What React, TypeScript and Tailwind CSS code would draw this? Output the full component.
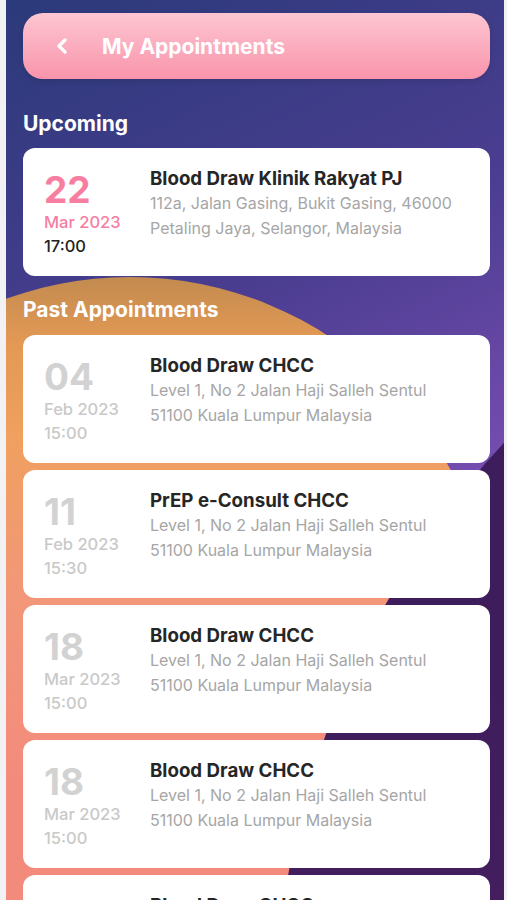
import React from 'react';

type Appt = {
  day: string;
  month: string;
  time: string;
  title: string;
  address: string[];
};

const upcoming: Appt = {
  day: '22',
  month: 'Mar 2023',
  time: '17:00',
  title: 'Blood Draw Klinik Rakyat PJ',
  address: ['112a, Jalan Gasing, Bukit Gasing, 46000', 'Petaling Jaya, Selangor, Malaysia'],
};

const chcc = ['Level 1, No 2 Jalan Haji Salleh Sentul', '51100 Kuala Lumpur Malaysia'];

const past: Appt[] = [
  { day: '04', month: 'Feb 2023', time: '15:00', title: 'Blood Draw CHCC', address: chcc },
  { day: '11', month: 'Feb 2023', time: '15:30', title: 'PrEP e-Consult CHCC', address: chcc },
  { day: '18', month: 'Mar 2023', time: '15:00', title: 'Blood Draw CHCC', address: chcc },
  { day: '18', month: 'Mar 2023', time: '15:00', title: 'Blood Draw CHCC', address: chcc },
  { day: '25', month: 'Mar 2023', time: '15:00', title: 'Blood Draw CHCC', address: chcc },
];

function Card({ appt, active }: { appt: Appt; active?: boolean }) {
  return (
    <div className="flex h-[128px] shrink-0 rounded-[12px] bg-white pl-[21px] pt-[19px]">
      <div className="w-[106px] shrink-0 pt-[5px]">
        <div
          className={`text-[37px] font-bold leading-[36px] ${
            active ? 'text-[#f77ea1]' : 'text-[#d2d2d2]'
          }`}
        >
          {appt.day}
        </div>
        <div
          className={`mt-[2px] text-[16.5px] font-medium leading-[24px] ${
            active ? 'text-[#f77ea1]' : 'text-[#c9c9c9]'
          }`}
        >
          {appt.month}
        </div>
        <div
          className={`text-[16.5px] font-medium leading-[24px] ${
            active ? 'text-[#222222]' : 'text-[#c9c9c9]'
          }`}
        >
          {appt.time}
        </div>
      </div>
      <div className="min-w-0">
        <div className="text-[18.7px] font-bold leading-[24px] text-[#262626]">{appt.title}</div>
        {appt.address.map((line, i) => (
          <div key={i} className="whitespace-nowrap text-[16px] leading-[25px] text-[#a6a6a6]">
            {line}
          </div>
        ))}
      </div>
    </div>
  );
}

export default function App() {
  return (
    <div className="flex h-[900px] w-full overflow-hidden bg-[#f2f2f5] pl-[6px] pr-[3px] font-['Inter','Noto_Sans',sans-serif]">
      <div className="relative flex-1 overflow-hidden bg-[linear-gradient(155deg,#2b3a7a_0%,#4a3d90_35%,#7b4fb4_65%)]">
        {/* background shapes */}
        <div className="absolute left-[-239px] top-[277px] h-[726px] w-[726px] rounded-full bg-[linear-gradient(to_bottom,#c38b4f_0%,#e39955_9%,#f0a05f_22%,#f2977a_45%,#f38b7c_70%)]" />
        <div className="absolute left-[269px] top-[172px] h-[1704px] w-[1704px] rounded-full bg-[linear-gradient(to_bottom,#3b1c5a_0%,#3f1d5c_30%,#4a1f62_60%)]" />

        <div className="relative flex flex-col pl-[17px] pr-[14px] pt-[13px]">
          <div className="flex h-[66px] items-center rounded-[20px] bg-[linear-gradient(to_bottom,#fdc6d2,#f994ab)] pl-[33px] shadow-[0_2px_6px_rgba(0,0,0,0.12)]">
            <svg width="12" height="16" viewBox="0 0 12 16" fill="none" className="shrink-0">
              <polyline
                points="9,2 3,8 9,14"
                stroke="white"
                strokeWidth="3.2"
                strokeLinecap="round"
                strokeLinejoin="round"
              />
            </svg>
            <span className="ml-[34px] text-[21px] font-bold leading-none text-white">My Appointments</span>
          </div>

          <h2 className="mt-[33px] text-[21px] font-bold leading-[24px] text-white">Upcoming</h2>
          <div className="mt-[12px]">
            <Card appt={upcoming} active />
          </div>

          <h2 className="mt-[22px] text-[21px] font-bold leading-[24px] text-white">Past Appointments</h2>
          <div className="mt-[13px] flex flex-col gap-[7px]">
            {past.map((a, i) => (
              <Card key={i} appt={a} />
            ))}
          </div>
        </div>
      </div>
    </div>
  );
}
